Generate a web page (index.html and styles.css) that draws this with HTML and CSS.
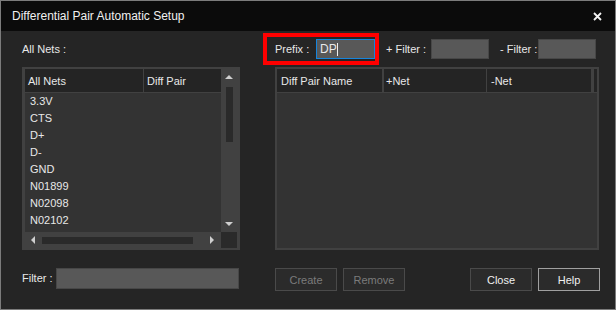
FILE: index.html
```html
<!DOCTYPE html>
<html>
<head>
<meta charset="utf-8">
<link rel="stylesheet" href="styles.css">
</head>
<body>
<div class="win">
  <div class="titlebar">
    <span class="title">Differential Pair Automatic Setup</span>
    <svg class="xicon" width="9" height="9" viewBox="0 0 9 9"><path d="M1 1L8 8M8 1L1 8" stroke="#f2f2f2" stroke-width="1.8"/></svg>
  </div>
  <div class="content">
    <div class="col-left">
      <div class="toprow"><span>All Nets :</span></div>
      <div class="listbox leftbox">
        <div class="listarea">
          <div class="lhead">
            <div class="hcell hc-a">All Nets</div>
            <div class="hcell hc-b">Diff Pair</div>
          </div>
          <div class="rows">
            <div class="row">3.3V</div>
            <div class="row">CTS</div>
            <div class="row">D+</div>
            <div class="row">D-</div>
            <div class="row">GND</div>
            <div class="row">N01899</div>
            <div class="row">N02098</div>
            <div class="row">N02102</div>
          </div>
        </div>
        <div class="vscroll">
          <div class="vbtn"><span class="tri-up"></span></div>
          <div class="vthumb"></div>
          <div class="vfill"></div>
          <div class="vbtn"><span class="tri-down"></span></div>
        </div>
        <div class="hscroll">
          <div class="hbtn"><span class="tri-left"></span></div>
          <div class="hthumb"></div>
          <div class="hfill"></div>
          <div class="hbtn hbtn-r"><span class="tri-right"></span></div>
        </div>
        <div class="corner"></div>
      </div>
      <div class="bottomrow">
        <span class="flabel">Filter :</span>
        <div class="field wide"></div>
      </div>
    </div>
    <div class="col-right">
      <div class="toprow">
        <div class="redbox">
          <span>Prefix :</span>
          <div class="field prefix"><span>DP</span><span class="caret"></span></div>
        </div>
        <span class="plabel">+ Filter :</span>
        <div class="field small"></div>
        <span class="mlabel">- Filter :</span>
        <div class="field small"></div>
      </div>
      <div class="listbox rightbox">
        <div class="rhead">
          <div class="hcell rc-1">Diff Pair Name</div>
          <div class="hcell rc-2">+Net</div>
          <div class="hcell rc-3">-Net</div>
          <div class="hcell rc-4"></div>
        </div>
        <div class="rbody"></div>
      </div>
      <div class="bottomrow btns">
        <button class="btn disabled">Create</button>
        <button class="btn disabled">Remove</button>
        <button class="btn push">Close</button>
        <button class="btn default">Help</button>
      </div>
    </div>
  </div>
</div>
</body>
</html>
```

FILE: styles.css
```css
html, body {
  margin: 0;
  background: #252525;
}
body {
  font-family: "Liberation Sans", Arial, sans-serif;
  font-size: 11px;
  color: #e8e8e8;
}
.win {
  width: 616px;
  height: 310px;
  box-sizing: border-box;
  border: 1px solid #7c7c7c;
  background: #252525;
  display: flex;
  flex-direction: column;
}
.titlebar {
  height: 30px;
  flex: none;
  background: #0b0b0b;
  display: flex;
  align-items: center;
  justify-content: space-between;
  padding: 0 13px 0 11px;
  font-size: 12px;
  color: #f0f0f0;
}
.xicon { display: block; }
.content {
  display: flex;
  padding: 2px 0 0 21px;
  gap: 23px;
}
.col-left { width: 218px; display: flex; flex-direction: column; }
.col-right { width: 337px; display: flex; flex-direction: column; }
.toprow {
  height: 32px;
  display: flex;
  align-items: center;
  margin-bottom: 2px;
}
.listbox {
  height: 183px;
  box-sizing: border-box;
  background: #414141;
}
.leftbox {
  padding: 2px 3px;
  display: grid;
  grid-template-columns: 196px 16px;
  grid-template-rows: 163px 16px;
}
.listarea { display: flex; flex-direction: column; }
.lhead, .rhead {
  height: 23px;
  display: flex;
  margin-bottom: 1px;
  flex: none;
}
.lhead { gap: 1px; }
.hcell {
  background: #242424;
  display: flex;
  align-items: center;
  box-sizing: border-box;
  padding-left: 3px;
  white-space: nowrap;
}
.hc-a { width: 118px; }
.hc-b { width: 77px; }
.rows { flex: 1; background: #333333; }
.row {
  height: 17px;
  line-height: 17px;
  padding-left: 5px;
}
.vscroll {
  display: flex;
  flex-direction: column;
  align-items: center;
  background: #414141;
}
.vbtn {
  height: 16px;
  width: 16px;
  display: flex;
  align-items: center;
  justify-content: center;
  flex: none;
}
.vthumb {
  width: 7px;
  height: 55px;
  margin-top: 2px;
  background: #2a2a2a;
  flex: none;
}
.vfill { flex: 1; }
.tri-up, .tri-down, .tri-left, .tri-right { width: 0; height: 0; display: block; }
.tri-up {
  border-left: 4px solid transparent;
  border-right: 4px solid transparent;
  border-bottom: 4px solid #cfcfcf;
}
.tri-down {
  border-left: 4px solid transparent;
  border-right: 4px solid transparent;
  border-top: 4px solid #cfcfcf;
}
.tri-left {
  border-top: 4px solid transparent;
  border-bottom: 4px solid transparent;
  border-right: 4px solid #cfcfcf;
}
.tri-right {
  border-top: 4px solid transparent;
  border-bottom: 4px solid transparent;
  border-left: 4px solid #cfcfcf;
}
.hscroll {
  display: flex;
  align-items: center;
  background: #414141;
}
.hbtn {
  width: 16px;
  height: 16px;
  display: flex;
  align-items: center;
  justify-content: center;
  flex: none;
}
.hbtn-r { width: 18px; }
.hthumb {
  width: 151px;
  height: 7px;
  margin-left: 1px;
  background: #2a2a2a;
  flex: none;
}
.hfill { flex: 1; }
.corner { background: #2a2a2a; }
.bottomrow {
  margin-top: 18px;
  height: 23px;
  display: flex;
  align-items: flex-start;
}
.flabel { width: 34px; flex: none; line-height: 20px; }
.field {
  box-sizing: border-box;
  background: #585858;
  border: 1px solid #474747;
  flex: none;
}
.wide { width: 183px; height: 21px; }
.small { width: 58px; height: 20px; }
.redbox {
  width: 116px;
  height: 32px;
  box-sizing: border-box;
  border: 4px solid #ff0000;
  display: flex;
  align-items: center;
  padding-left: 8px;
}
.prefix {
  margin-left: auto;
  width: 59px;
  height: 20px;
  border: 1px solid #1585dd;
  display: flex;
  align-items: center;
  padding-left: 3px;
  font-size: 12px;
}
.caret {
  width: 1px;
  height: 13px;
  background: #f0f0f0;
}
.plabel { margin-left: 7px; width: 45px; flex: none; }
.mlabel { margin-left: 11px; width: 38px; flex: none; }
.rightbox {
  margin-left: 12px;
  width: 324px;
  padding: 2px;
  display: flex;
  flex-direction: column;
}
.rc-1 { width: 105px; padding-left: 4px; }
.rc-2 { width: 102px; margin-left: 2px; padding-left: 2px; }
.rc-3 { width: 104px; margin-left: 1px; padding-left: 4px; }
.rc-4 { width: 3px; margin-left: 3px; padding: 0; }
.rbody { flex: 1; background: #333333; }
.btns { gap: 6px; }
.btn {
  width: 62px;
  height: 23px;
  box-sizing: border-box;
  background: #2b2b2b;
  border: 1px solid #4a4a4a;
  font-family: "Liberation Sans", Arial, sans-serif;
  font-size: 11px;
  color: #f0f0f0;
  padding: 0;
  margin: 0;
}
.btns .btn:first-child { margin-left: 12px; }
.disabled { color: #7b7b7b; }
.push { margin-left: auto; }
.default { border-color: #a0a0a0; }
```
